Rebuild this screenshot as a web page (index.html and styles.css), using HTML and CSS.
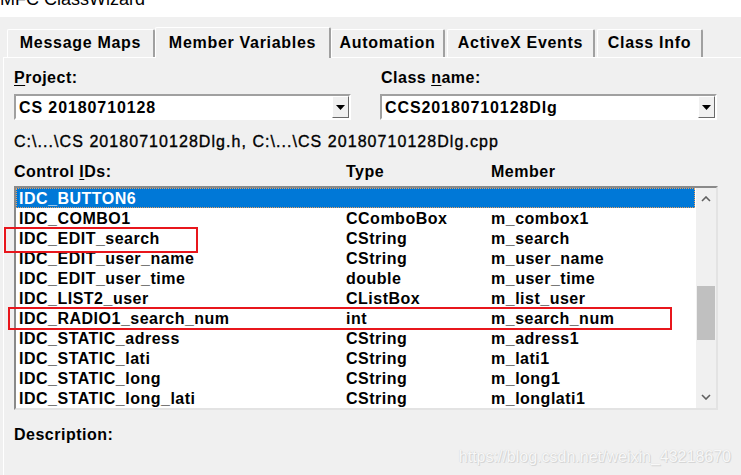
FILE: index.html
```html
<!DOCTYPE html>
<html lang="en">

<head>
    <meta charset="UTF-8">
    <title>MFC ClassWizard</title>
    <link rel="stylesheet" href="styles.css">
</head>

<body>
    <div class="titlebar">
        <span class="title">MFC ClassWizard</span>
    </div>

    <ul class="tabs">
        <li class="tab tab-msg">Message Maps</li>
        <li class="tab tab-var active">Member Variables</li>
        <li class="tab tab-auto">Automation</li>
        <li class="tab tab-ax">ActiveX Events</li>
        <li class="tab tab-info">Class Info</li>
    </ul>

    <div class="panel">
        <div class="pickers">
            <div class="field field-project">
                <label><u>P</u>roject:</label>
                <div class="combo">
                    <span class="combo-text">CS 20180710128</span>
                    <span class="combo-btn">
                        <svg width="9" height="5" viewBox="0 0 9 5"><polygon points="0,0 9,0 4.5,5" fill="#000"/></svg>
                    </span>
                </div>
            </div>
            <div class="field field-class">
                <label>Class <u>n</u>ame:</label>
                <div class="combo">
                    <span class="combo-text">CCS20180710128Dlg</span>
                    <span class="combo-btn">
                        <svg width="9" height="5" viewBox="0 0 9 5"><polygon points="0,0 9,0 4.5,5" fill="#000"/></svg>
                    </span>
                </div>
            </div>
        </div>

        <div class="path">C:\...\CS 20180710128Dlg.h, C:\...\CS 20180710128Dlg.cpp</div>

        <div class="cols">
            <span>Control <u>I</u>Ds:</span>
            <span>Type</span>
            <span>Member</span>
        </div>

        <div class="listbox">
            <div class="rows">
                <div class="row selected"><span>IDC_BUTTON6</span><span></span><span></span></div>
                <div class="row"><span>IDC_COMBO1</span><span>CComboBox</span><span>m_combox1</span></div>
                <div class="row"><span>IDC_EDIT_search</span><span>CString</span><span>m_search</span></div>
                <div class="row"><span>IDC_EDIT_user_name</span><span>CString</span><span>m_user_name</span></div>
                <div class="row"><span>IDC_EDIT_user_time</span><span>double</span><span>m_user_time</span></div>
                <div class="row"><span>IDC_LIST2_user</span><span>CListBox</span><span>m_list_user</span></div>
                <div class="row"><span>IDC_RADIO1_search_num</span><span>int</span><span>m_search_num</span></div>
                <div class="row"><span>IDC_STATIC_adress</span><span>CString</span><span>m_adress1</span></div>
                <div class="row"><span>IDC_STATIC_lati</span><span>CString</span><span>m_lati1</span></div>
                <div class="row"><span>IDC_STATIC_long</span><span>CString</span><span>m_long1</span></div>
                <div class="row"><span>IDC_STATIC_long_lati</span><span>CString</span><span>m_longlati1</span></div>
            </div>
            <div class="scrollbar">
                <svg class="arrow" width="10" height="6" viewBox="0 0 10 6"><polyline points="1,5 5,1 9,5" fill="none" stroke="#606060" stroke-width="1.6"/></svg>
                <div class="track"><div class="thumb"></div></div>
                <svg class="arrow" width="10" height="6" viewBox="0 0 10 6"><polyline points="1,1 5,5 9,1" fill="none" stroke="#606060" stroke-width="1.6"/></svg>
            </div>

            <div class="mark mark-edit"></div>
            <div class="mark mark-radio"></div>
        </div>

        <div class="desc">Description:</div>

        <div class="watermark">https://blog.csdn.net/weixin_43218670</div>
    </div>
</body>

</html>
```

FILE: styles.css
```css
body {
    margin: 0;
    width: 741px;
    height: 475px;
    overflow: hidden;
    background-color: #f0f0f0;
    font-family: "Liberation Sans", Arial, sans-serif;
    font-weight: bold;
    font-size: 16px;
    letter-spacing: 0.5px;
    color: #000;
}

u {
    text-decoration-thickness: 1px;
    text-underline-offset: 2px;
}

.titlebar {
    height: 17px;
    background-color: #fff;
    overflow: hidden;
}

.title {
    display: block;
    margin-top: -11px;
    font-weight: normal;
    font-size: 18px;
    letter-spacing: 0;
}

/* tabs */
.tabs {
    display: flex;
    align-items: flex-end;
    margin: 9px 0 0;
    padding: 0 0 0 7px;
    height: 31px;
}

.tab {
    list-style: none;
    height: 28px;
    box-sizing: border-box;
    border-top: 1px solid #fff;
    border-left: 1px solid #fff;
    border-right: 2px solid #a0a0a0;
    border-top-left-radius: 2px;
    border-top-right-radius: 2px;
    text-align: center;
    line-height: 26px;
    margin-right: 2px;
    letter-spacing: 0.7px;
}

.tab-msg { width: 148px; }
.tab-var { width: 176px; }
.tab-auto { width: 114px; }
.tab-ax { width: 148px; }
.tab-info { width: 106px; }

.tab.active {
    height: 31px;
    margin: 0 0 -1px -2px;
    position: relative;
    z-index: 1;
    background-color: #f0f0f0;
    line-height: 29px;
}

.panel {
    position: relative;
    margin-left: 3px;
    border-top: 1px solid #fff;
    border-left: 1px solid #fff;
    padding: 11px 0 0 10px;
    height: 406px;
}

/* combo boxes */
.pickers {
    display: flex;
    gap: 29px;
}

.field label {
    display: block;
    line-height: 18px;
    height: 18px;
}

.field-class label {
    padding-left: 1px;
}

.combo {
    margin-top: 7px;
    width: 337px;
    height: 26px;
    box-sizing: border-box;
    border: 2px solid;
    border-color: #a0a0a0 #fff #fff #a0a0a0;
    background-color: #fff;
    display: flex;
    align-items: center;
    justify-content: space-between;
}

.combo-text {
    padding-left: 3px;
    padding-top: 1px;
    letter-spacing: 0.9px;
}

.combo-btn {
    width: 17px;
    height: 22px;
    box-sizing: border-box;
    border: 1px solid;
    border-color: #fff #696969 #696969 #fff;
    background-color: #f0f0f0;
    display: flex;
    align-items: center;
    justify-content: center;
}

.path {
    margin-top: 13px;
    line-height: 18px;
    font-weight: normal;
    letter-spacing: 1.05px;
    -webkit-text-stroke: 0.35px #000;
}

.cols {
    margin-top: 12px;
    line-height: 18px;
    display: grid;
    grid-template-columns: 332px 145px 1fr;
}

/* list */
.listbox {
    position: relative;
    margin-top: 5px;
    width: 704px;
    height: 224px;
    box-sizing: border-box;
    border: 2px solid;
    border-color: #8a8a8a #e3e3e3 #e3e3e3 #8a8a8a;
    background-color: #fff;
    display: flex;
}

.rows {
    flex: 1;
}

.row {
    display: grid;
    grid-template-columns: 327px 145px 1fr;
    height: 20px;
    box-sizing: border-box;
    padding: 1px 0 0 3px;
    line-height: 19px;
}

.row.selected {
    background-color: #0078d7;
    color: #fff;
    outline: 1px dotted #e8a060;
    outline-offset: -1px;
    margin-right: 1px;
}

.scrollbar {
    width: 20px;
    background-color: #f0f0f0;
    display: flex;
    flex-direction: column;
    align-items: center;
}

.arrow {
    margin: 8px 0;
}

.track {
    flex: 1;
    width: 100%;
}

.thumb {
    margin: 76px 1px 0;
    height: 54px;
    background-color: #c0c0c0;
}

.mark {
    position: absolute;
    border: 2px solid #e8161c;
}

.mark-edit {
    left: -12px;
    top: 39px;
    width: 190px;
    height: 22px;
}

.mark-radio {
    left: -8px;
    top: 119px;
    width: 660px;
    height: 19px;
}

.desc {
    margin-top: 16px;
    line-height: 18px;
}

.watermark {
    position: absolute;
    right: 10px;
    bottom: 9px;
    font-weight: normal;
    font-size: 16px;
    letter-spacing: 0;
    color: #f8f8f8;
    text-shadow: 0 0 1px #c8c8c8, 1px 1px 0 #d8d8d8;
}
```
